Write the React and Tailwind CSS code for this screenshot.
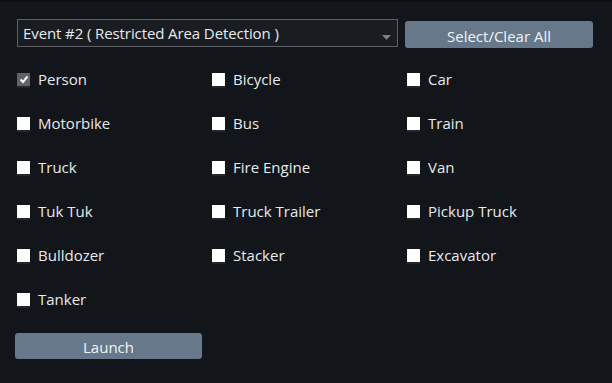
import React from "react";

const items = [
  ["Person", true], ["Bicycle", false], ["Car", false],
  ["Motorbike", false], ["Bus", false], ["Train", false],
  ["Truck", false], ["Fire Engine", false], ["Van", false],
  ["Tuk Tuk", false], ["Truck Trailer", false], ["Pickup Truck", false],
  ["Bulldozer", false], ["Stacker", false], ["Excavator", false],
  ["Tanker", false],
];

function Box({ checked }) {
  if (checked) {
    return (
      <span className="w-[13px] h-[13px] bg-[#5f6368] shadow-[0_2px_0_#23262b] flex items-center justify-center">
        <svg width="10" height="9" viewBox="0 0 10 9">
          <path d="M1.5 4.5 L4 7 L8.5 1.5" fill="none" stroke="#ffffff" strokeWidth="2" />
        </svg>
      </span>
    );
  }
  return <span className="w-[13px] h-[13px] bg-white shadow-[0_2px_0_#23262b]" />;
}

export default function App() {
  return (
    <div
      className="w-[612px] h-[383px] bg-[#12151a] border-t-2 border-[#0c0e11] text-[#e8eaec] text-[15px] px-[17px] pt-[17px]"
      style={{ fontFamily: '"Open Sans", "Noto Sans", sans-serif' }}
    >
      <div className="flex items-start gap-[7px]">
        <div className="relative w-[381px] h-[28px] border border-[#5d6166] bg-[#191c21] flex items-center pl-[5px] pt-[1px]">
          <span className="tracking-[-0.1px]">Event #2 ( Restricted Area Detection )</span>
          <svg className="absolute right-[6px] top-[15px]" width="9" height="5" viewBox="0 0 9 5">
            <path d="M0 0 L9 0 L4.5 5 Z" fill="#7d8186" />
          </svg>
        </div>
        <button className="mt-[2px] w-[188px] h-[27px] rounded-[3px] bg-[#66788a] text-[#f2f4f6] flex items-center justify-center pt-[3px]">
          Select/Clear All
        </button>
      </div>
      <div className="grid grid-cols-[195px_195px_195px] mt-[9px]">
        {items.map(([label, checked]) => (
          <div key={label} className="h-[44px] flex items-center gap-[8px]">
            <Box checked={checked} />
            <span>{label}</span>
          </div>
        ))}
      </div>
      <button className="mt-[12px] -ml-[2px] w-[187px] h-[26px] rounded-[3px] bg-[#66788a] text-[#f2f4f6] flex items-center justify-center pt-[3px]">
        Launch
      </button>
    </div>
  );
}
